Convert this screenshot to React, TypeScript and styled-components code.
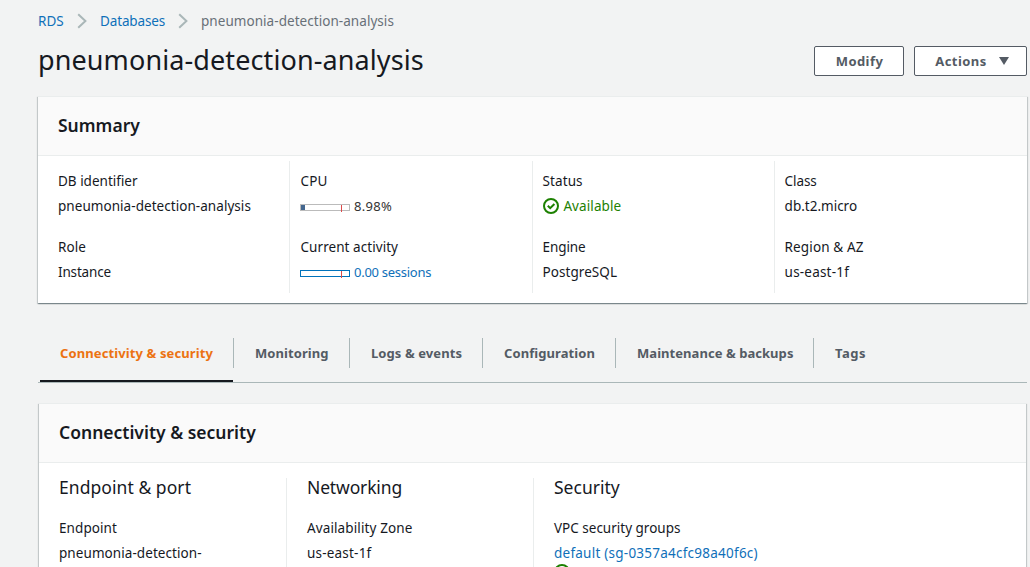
import React from 'react';
import styled, { createGlobalStyle } from 'styled-components';

const Global = createGlobalStyle`
  * { box-sizing: border-box; }
  html, body { margin: 0; padding: 0; background: #f2f3f3; }
`;

const Page = styled.main`
  height: 567px;
  overflow: hidden;
  padding: 10px 3px 0 38px;
  background: #f2f3f3;
  color: #16191f;
  font-family: 'Noto Sans', 'Open Sans', sans-serif;
  font-size: 13.5px;
  line-height: 22px;
  white-space: nowrap;
`;

const Txt = styled.span<{ $ls?: number }>`
  letter-spacing: ${(p) => p.$ls ?? 0}px;
`;

const Breadcrumb = styled.nav`
  display: flex;
  align-items: center;
  height: 22px;
`;

const Crumb = styled.span<{ $width?: number; $ls?: number; $current?: boolean }>`
  width: ${(p) => (p.$width ? `${p.$width}px` : 'auto')};
  letter-spacing: ${(p) => p.$ls ?? 0}px;
  color: ${(p) => (p.$current ? '#687078' : '#0f70b9')};
`;

const Chevron = styled.svg`
  width: 10px;
  height: 16px;
  margin: 0 13.5px 0 13px;
  fill: none;
  stroke: #aab7b8;
  stroke-width: 2;
`;

const TitleRow = styled.header`
  display: flex;
  align-items: center;
  gap: 10px;
  height: 30px;
  margin-top: 14px;
`;

const Title = styled.h1`
  flex: 1;
  margin: 0;
  padding-bottom: 2px;
  font-size: 27px;
  font-weight: 400;
  line-height: 28px;
  letter-spacing: 0.1px;
`;

const Button = styled.button<{ $width: number; $shift?: number }>`
  display: flex;
  align-items: center;
  justify-content: center;
  gap: 12px;
  width: ${(p) => p.$width}px;
  height: 30px;
  padding: 0 0 0 ${(p) => p.$shift ?? 0}px;
  border: 1px solid #545b64;
  border-radius: 2px;
  background: #fff;
  color: #545b64;
  font: 700 13px/28px 'Noto Sans', sans-serif;
  letter-spacing: 0.45px;
`;

const Caret = styled.svg`
  width: 10px;
  height: 8px;
  fill: #545b64;
`;

const Panel = styled.section<{ $inset?: number }>`
  margin: 20px ${(p) => p.$inset ?? 0}px 0;
  background: #fff;
  box-shadow: 0 1px 1px 0 rgba(0, 28, 36, 0.3), 1px 1px 1px 0 rgba(0, 28, 36, 0.15),
    -1px 1px 1px 0 rgba(0, 28, 36, 0.15);
`;

const PanelHeader = styled.div`
  height: 60px;
  padding: 0 20px;
  border-top: 1px solid #eaeded;
  border-bottom: 1px solid #eaeded;
  background: #fafafa;
`;

const PanelTitle = styled.h2`
  margin: 0;
  font-size: 17.5px;
  font-weight: 600;
  line-height: 56px;
`;

const SummaryGrid = styled.div`
  display: grid;
  grid-template-columns: 251px 243px 242px 1fr;
  padding: 5px 0 10px;
`;

const SummaryColumn = styled.div`
  display: flex;
  flex-direction: column;
  gap: 16px;
  height: 132px;
  padding: 9px 0 0 9.6px;
  border-left: 1px solid #eaeded;
  &:first-child {
    padding-left: 20px;
    border-left: 0;
  }
  &:nth-child(2) {
    padding-left: 10.5px;
  }
`;

const Field = styled.div`
  display: flex;
  flex-direction: column;
  gap: 3px;
  height: 50px;
`;

const Value = styled.div<{ $tone?: 'link' | 'success' | 'muted'; $gap?: number }>`
  display: flex;
  flex: none;
  align-items: center;
  gap: ${(p) => p.$gap ?? 4}px;
  height: 22px;
  color: ${(p) =>
    p.$tone === 'link' ? '#0f70b9' : p.$tone === 'success' ? '#1d8102' : p.$tone === 'muted' ? '#333' : 'inherit'};
`;

const RuleStatus = styled(Value)`
  margin-top: -6px;
`;

const MeterText = styled.span<{ $ls: number }>`
  font-size: 13px;
  letter-spacing: ${(p) => p.$ls}px;
`;

const MeterSvg = styled.svg`
  width: 50px;
  height: 8px;
  margin: 4px 0 0 -0.5px;
`;

const Tabs = styled.nav`
  display: flex;
  height: 45px;
  margin-top: 35px;
  padding-left: 2px;
  border-bottom: 1px solid #aab7b8;
`;

const Tab = styled.a<{ $width: number; $ls: number; $active?: boolean }>`
  position: relative;
  width: ${(p) => p.$width}px;
  padding-left: ${(p) => (p.$active ? 20 : 21)}px;
  color: ${(p) => (p.$active ? '#ec7211' : '#545b64')};
  font-size: 13px;
  font-weight: 700;
  line-height: 30px;
  letter-spacing: ${(p) => p.$ls}px;
  &::after {
    content: '';
    display: ${(p) => (p.$active ? 'block' : 'none')};
    position: absolute;
    left: 0;
    right: 0;
    bottom: 0;
    height: 2px;
    background: #16191f;
  }
`;

const TabDivider = styled.i`
  width: 1px;
  height: 30px;
  background: #aab7b8;
`;

const DetailGrid = styled.div`
  display: grid;
  grid-template-columns: 247px 247px 1fr;
  height: 160px;
  padding-top: 15px;
`;

const DetailColumn = styled.div`
  padding-left: 20px;
  border-left: 1px solid #eaeded;
  &:first-child {
    border-left: 0;
  }
`;

const DetailTitle = styled.h3<{ $ls?: number }>`
  margin: 0 0 21px;
  font-size: 17.5px;
  font-weight: 400;
  line-height: 18px;
  letter-spacing: ${(p) => p.$ls ?? 0}px;
`;

const CheckIcon = styled.svg`
  flex: none;
  width: 16px;
  height: 16px;
  fill: none;
  stroke: #1d8102;
  stroke-width: 2;
`;

const Check = () => (
  <CheckIcon viewBox="0 0 16 16">
    <circle cx="8" cy="8" r="7" />
    <path d="M4.8 7.8 7.2 10.2 11.4 6" />
  </CheckIcon>
);

const Separator = () => (
  <Chevron viewBox="0 0 10 16">
    <path d="M1.2 1.3 8.4 8 1.2 14.7" />
  </Chevron>
);

const Meter = ({ fill, border }: { fill: number; border: string }) => (
  <MeterSvg viewBox="0 0 50 8" shapeRendering="crispEdges">
    <rect x="0.5" y="0.5" width="49" height="6" fill="#fff" stroke={border} />
    {fill > 0 && <rect x="1" y="1" width={fill} height="5" fill="#44678f" />}
    <rect x="41" y="1" width="1" height="7" fill="#dd4b4b" />
  </MeterSvg>
);

const tabs: [string, number, number][] = [
  ['Connectivity & security', 193, 0.11],
  ['Monitoring', 115, 0.07],
  ['Logs & events', 132, 0.08],
  ['Configuration', 132, 0.08],
  ['Maintenance & backups', 197, 0.05],
  ['Tags', 60, 0.5],
];

export default function App() {
  return (
    <>
      <Global />
      <Page>
        <Breadcrumb>
          <Crumb $width={25.5}>RDS</Crumb>
          <Separator />
          <Crumb $width={64.5} $ls={-0.14}>Databases</Crumb>
          <Separator />
          <Crumb $ls={0.05} $current>pneumonia-detection-analysis</Crumb>
        </Breadcrumb>
        <TitleRow>
          <Title>pneumonia-detection-analysis</Title>
          <Button $width={90} $shift={1}>Modify</Button>
          <Button $width={113} $shift={3}>
            Actions
            <Caret viewBox="0 0 10 8"><path d="M0 0h10L5 8z" /></Caret>
          </Button>
        </TitleRow>

        <Panel>
          <PanelHeader><PanelTitle>Summary</PanelTitle></PanelHeader>
          <SummaryGrid>
            <SummaryColumn>
              <Field>
                <Txt>DB identifier</Txt>
                <Value><Txt $ls={0.05}>pneumonia-detection-analysis</Txt></Value>
              </Field>
              <Field>
                <Txt $ls={0.1}>Role</Txt>
                <Value><Txt $ls={-0.16}>Instance</Txt></Value>
              </Field>
            </SummaryColumn>
            <SummaryColumn>
              <Field>
                <Txt $ls={0.1}>CPU</Txt>
                <Value $tone="muted"><Meter fill={4} border="#bbb" /><MeterText $ls={0.28}>8.98%</MeterText></Value>
              </Field>
              <Field>
                <Txt $ls={0.06}>Current activity</Txt>
                <Value $tone="link"><Meter fill={0} border="#0073bb" /><MeterText $ls={-0.27}>0.00 sessions</MeterText></Value>
              </Field>
            </SummaryColumn>
            <SummaryColumn>
              <Field>
                <Txt $ls={0.08}>Status</Txt>
                <Value $tone="success" $gap={4.8}><Check /><Txt $ls={0.1}>Available</Txt></Value>
              </Field>
              <Field>
                <Txt $ls={-0.1}>Engine</Txt>
                <Value><Txt $ls={0.05}>PostgreSQL</Txt></Value>
              </Field>
            </SummaryColumn>
            <SummaryColumn>
              <Field>
                <Txt $ls={-0.1}>Class</Txt>
                <Value><Txt>db.t2.micro</Txt></Value>
              </Field>
              <Field>
                <Txt $ls={0.13}>Region &amp; AZ</Txt>
                <Value><Txt $ls={0.2}>us-east-1f</Txt></Value>
              </Field>
            </SummaryColumn>
          </SummaryGrid>
        </Panel>

        <Tabs>
          {tabs.map(([label, width, ls], i) => (
            <React.Fragment key={label}>
              {i > 0 && <TabDivider />}
              <Tab $width={width} $ls={ls} $active={i === 0}>{label}</Tab>
            </React.Fragment>
          ))}
        </Tabs>

        <Panel $inset={1}>
          <PanelHeader><PanelTitle>Connectivity &amp; security</PanelTitle></PanelHeader>
          <DetailGrid>
            <DetailColumn>
              <DetailTitle $ls={0.06}>Endpoint &amp; port</DetailTitle>
              <Field>
                <Txt $ls={0.08}>Endpoint</Txt>
                <Value><Txt $ls={0.07}>pneumonia-detection-</Txt></Value>
              </Field>
            </DetailColumn>
            <DetailColumn>
              <DetailTitle $ls={-0.15}>Networking</DetailTitle>
              <Field>
                <Txt $ls={0.12}>Availability Zone</Txt>
                <Value><Txt $ls={0.2}>us-east-1f</Txt></Value>
              </Field>
            </DetailColumn>
            <DetailColumn>
              <DetailTitle>Security</DetailTitle>
              <Field>
                <Txt>VPC security groups</Txt>
                <Value $tone="link"><Txt $ls={0.24}>default (sg-0357a4cfc98a40f6c)</Txt></Value>
                <RuleStatus $tone="success"><Check /></RuleStatus>
              </Field>
            </DetailColumn>
          </DetailGrid>
        </Panel>
      </Page>
    </>
  );
}
